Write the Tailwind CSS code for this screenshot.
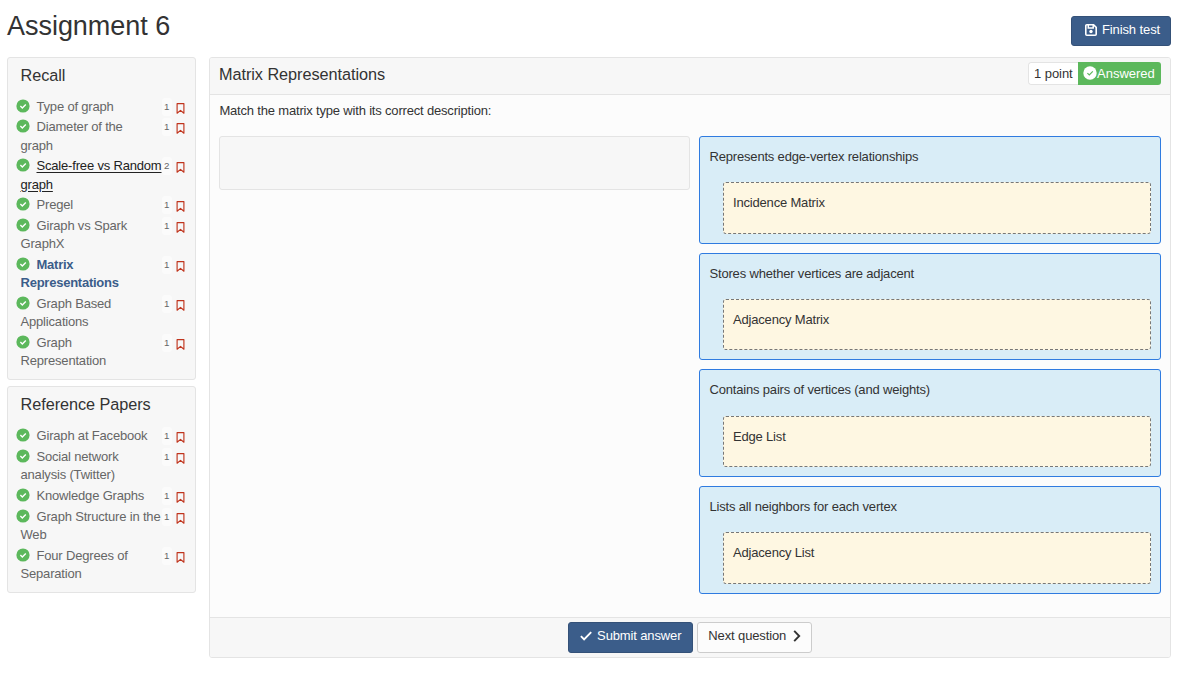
<!DOCTYPE html>
<html lang="en">
<head>
<meta charset="utf-8">
<title>Assignment 6</title>
<script src="https://cdn.jsdelivr.net/npm/@tailwindcss/browser@4"></script>
</head>
<body class="bg-white text-[#333] text-[13px] leading-[18.57px] tracking-[-0.18px] font-['Liberation_Sans',Arial,sans-serif]">
<svg class="hidden">
  <symbol id="ok" viewBox="0 0 14 14"><circle cx="7" cy="7" r="6.6" fill="#5cb85c"/><path d="M4.4 7.1l1.9 1.8 3.5-3.5" fill="none" stroke="#fff" stroke-width="1.4"/></symbol>
  <symbol id="mark" viewBox="0 0 9 11"><path d="M1.1 .6h6.8v9.6L4.5 7.4 1.1 10.2z" fill="none" stroke="#c0341d" stroke-width="1.15" stroke-linejoin="round"/></symbol>
</svg>
<header class="flex justify-between items-start h-[57px] pl-[7px] pr-[9px]">
  <h1 class="text-[27px] leading-[30px] pt-[11px] tracking-[-0.03px]">Assignment 6</h1>
  <button class="mt-4 h-[30px] w-[100px] flex items-center justify-center gap-[5px] rounded-[3px] border border-[#345178] bg-[#3b5d8a] text-white tracking-[-0.1px] pb-[2px] pl-[3px]">
    <svg class="size-3" viewBox="0 0 12 12"><path d="M1.8 .8h6.8l2.6 2.6v6.8a1 1 0 0 1-1 1H1.8a1 1 0 0 1-1-1V1.8a1 1 0 0 1 1-1z" fill="none" stroke="#fff" stroke-width="1.6"/><path d="M3.3 1v3h4.9V1" fill="none" stroke="#fff" stroke-width="1.5"/><circle cx="6" cy="7.5" r="1.7" fill="#fff"/></svg>
    <span>Finish test</span>
  </button>
</header>
<main class="flex items-start gap-[13px] pl-[7px]">
  <aside class="w-[189px] flex flex-col gap-[6px] text-[#666]">
    <section class="h-[323px] rounded-[3px] border border-[#e4e4e4] bg-[#f7f7f7] pt-[7px] pl-[8px]">
      <h2 class="text-[16.25px] leading-5 text-[#333] tracking-[-0.05px] pl-[4.5px] mb-3">Recall</h2>
      <ul>
        <li class="flex items-start h-5"><svg class="size-[14px] mt-[2px] shrink-0"><use href="#ok"/></svg><span class="w-[141px] -ml-[9.5px] indent-4 leading-[19px]">Type of graph</span><span class="w-[10px] h-[18px] mt-px bg-[#fbfbfb] rounded-[3px] text-[9.75px] pl-[2.5px]">1</span><svg class="w-[9px] h-[11px] mt-[6px] ml-[4.5px]"><use href="#mark"/></svg></li>
        <li class="flex items-start h-[39px]"><svg class="size-[14px] mt-[2px] shrink-0"><use href="#ok"/></svg><span class="w-[141px] -ml-[9.5px] indent-4 leading-[19px]">Diameter of the<br>graph</span><span class="w-[10px] h-[18px] mt-px bg-[#fbfbfb] rounded-[3px] text-[9.75px] pl-[2.5px]">1</span><svg class="w-[9px] h-[11px] mt-[6px] ml-[4.5px]"><use href="#mark"/></svg></li>
        <li class="flex items-start h-[39px]"><svg class="size-[14px] mt-[2px] shrink-0"><use href="#ok"/></svg><span class="w-[141px] -ml-[9.5px] indent-4 leading-[19px] whitespace-nowrap text-[#222] underline underline-offset-2">Scale-free vs Random<br>graph</span><span class="w-[10px] h-[18px] mt-px bg-[#fbfbfb] rounded-[3px] text-[9.75px] pl-[2.5px]">2</span><svg class="w-[9px] h-[11px] mt-[6px] ml-[4.5px]"><use href="#mark"/></svg></li>
        <li class="flex items-start h-[21px]"><svg class="size-[14px] mt-[2px] shrink-0"><use href="#ok"/></svg><span class="w-[141px] -ml-[9.5px] indent-4 leading-[19px]">Pregel</span><span class="w-[10px] h-[18px] mt-px bg-[#fbfbfb] rounded-[3px] text-[9.75px] pl-[2.5px]">1</span><svg class="w-[9px] h-[11px] mt-[6px] ml-[4.5px]"><use href="#mark"/></svg></li>
        <li class="flex items-start h-[39px]"><svg class="size-[14px] mt-[2px] shrink-0"><use href="#ok"/></svg><span class="w-[141px] -ml-[9.5px] indent-4 pt-px leading-[18px]">Giraph vs Spark<br>GraphX</span><span class="w-[10px] h-[18px] mt-px bg-[#fbfbfb] rounded-[3px] text-[9.75px] pl-[2.5px]">1</span><svg class="w-[9px] h-[11px] mt-[6px] ml-[4.5px]"><use href="#mark"/></svg></li>
        <li class="flex items-start h-[39px]"><svg class="size-[14px] mt-[2px] shrink-0"><use href="#ok"/></svg><span class="w-[141px] -ml-[9.5px] indent-4 pt-px leading-[18px] font-bold text-[#3b5d8a] tracking-[-0.24px]">Matrix<br>Representations</span><span class="w-[10px] h-[18px] mt-px bg-[#fbfbfb] rounded-[3px] text-[9.75px] pl-[2.5px]">1</span><svg class="w-[9px] h-[11px] mt-[6px] ml-[4.5px]"><use href="#mark"/></svg></li>
        <li class="flex items-start h-[39px]"><svg class="size-[14px] mt-[2px] shrink-0"><use href="#ok"/></svg><span class="w-[141px] -ml-[9.5px] indent-4 pt-px leading-[18px]">Graph Based<br>Applications</span><span class="w-[10px] h-[18px] mt-px bg-[#fbfbfb] rounded-[3px] text-[9.75px] pl-[2.5px]">1</span><svg class="w-[9px] h-[11px] mt-[6px] ml-[4.5px]"><use href="#mark"/></svg></li>
        <li class="flex items-start h-[39px]"><svg class="size-[14px] mt-[2px] shrink-0"><use href="#ok"/></svg><span class="w-[141px] -ml-[9.5px] indent-4 pt-px leading-[18px]">Graph<br>Representation</span><span class="w-[10px] h-[18px] mt-px bg-[#fbfbfb] rounded-[3px] text-[9.75px] pl-[2.5px]">1</span><svg class="w-[9px] h-[11px] mt-[6px] ml-[4.5px]"><use href="#mark"/></svg></li>
      </ul>
    </section>
    <section class="h-[207px] rounded-[3px] border border-[#e4e4e4] bg-[#f7f7f7] pt-[7px] pl-[8px]">
      <h2 class="text-[16.25px] leading-5 text-[#333] tracking-[-0.05px] pl-[4.5px] mb-3">Reference Papers</h2>
      <ul>
        <li class="flex items-start h-[21px]"><svg class="size-[14px] mt-[2px] shrink-0"><use href="#ok"/></svg><span class="w-[141px] -ml-[9.5px] indent-4 leading-[19px]">Giraph at Facebook</span><span class="w-[10px] h-[18px] mt-px bg-[#fbfbfb] rounded-[3px] text-[9.75px] pl-[2.5px]">1</span><svg class="w-[9px] h-[11px] mt-[6px] ml-[4.5px]"><use href="#mark"/></svg></li>
        <li class="flex items-start h-[39px]"><svg class="size-[14px] mt-[2px] shrink-0"><use href="#ok"/></svg><span class="w-[141px] -ml-[9.5px] indent-4 pt-px leading-[18px]">Social network<br>analysis (Twitter)</span><span class="w-[10px] h-[18px] mt-px bg-[#fbfbfb] rounded-[3px] text-[9.75px] pl-[2.5px]">1</span><svg class="w-[9px] h-[11px] mt-[6px] ml-[4.5px]"><use href="#mark"/></svg></li>
        <li class="flex items-start h-[21px]"><svg class="size-[14px] mt-[2px] shrink-0"><use href="#ok"/></svg><span class="w-[141px] -ml-[9.5px] indent-4 leading-[19px]">Knowledge Graphs</span><span class="w-[10px] h-[18px] mt-px bg-[#fbfbfb] rounded-[3px] text-[9.75px] pl-[2.5px]">1</span><svg class="w-[9px] h-[11px] mt-[6px] ml-[4.5px]"><use href="#mark"/></svg></li>
        <li class="flex items-start h-[39px]"><svg class="size-[14px] mt-[2px] shrink-0"><use href="#ok"/></svg><span class="w-[141px] -ml-[9.5px] indent-4 pt-px leading-[18px] whitespace-nowrap">Graph Structure in the<br>Web</span><span class="w-[10px] h-[18px] mt-px bg-[#fbfbfb] rounded-[3px] text-[9.75px] pl-[2.5px]">1</span><svg class="w-[9px] h-[11px] mt-[6px] ml-[4.5px]"><use href="#mark"/></svg></li>
        <li class="flex items-start h-[39px]"><svg class="size-[14px] mt-[2px] shrink-0"><use href="#ok"/></svg><span class="w-[141px] -ml-[9.5px] indent-4 pt-px leading-[18px]">Four Degrees of<br>Separation</span><span class="w-[10px] h-[18px] mt-px bg-[#fbfbfb] rounded-[3px] text-[9.75px] pl-[2.5px]">1</span><svg class="w-[9px] h-[11px] mt-[6px] ml-[4.5px]"><use href="#mark"/></svg></li>
      </ul>
    </section>
  </aside>
  <section class="w-[962px] h-[601px] rounded-[3px] border border-[#e4e4e4] bg-[#fcfcfc] flex flex-col overflow-hidden">
    <div class="h-[37px] shrink-0 bg-[#f7f7f7] border-b border-[#e4e4e4] flex items-start justify-between pl-[9px] pr-[9px]">
      <h2 class="text-[16.25px] leading-5 pt-[6px] tracking-[-0.05px]">Matrix Representations</h2>
      <div class="mt-1 flex h-[23px] rounded-[3px] overflow-hidden leading-[23px] tracking-normal">
        <span class="w-[50px] bg-white border border-r-0 border-[#e4e4e4] rounded-l-[3px] pl-[5px] leading-[21px] tracking-[-0.05px]">1 point</span>
        <span class="w-[83px] bg-[#5cb85c] text-white flex pl-[5px]"><svg class="size-[14px] mt-[4px] shrink-0" viewBox="0 0 14 14"><circle cx="7" cy="7" r="6.7" fill="#fff"/><path d="M4.4 7.1l1.9 1.8 3.5-3.5" fill="none" stroke="#5cb85c" stroke-width="1.2"/></svg>Answered</span>
      </div>
    </div>
    <div class="flex-1 px-[9px] pt-[7px]">
      <p class="pl-[.4px]">Match the matrix type with its correct description:</p>
      <div class="flex gap-[9px] mt-[15.43px]">
        <div class="w-[471px] h-[54px] rounded-[3px] border border-[#e4e4e4] bg-[#f7f7f7]"></div>
        <div class="w-[462px] flex flex-col gap-[9px]">
          <div class="h-[107.7px] rounded-[3px] border border-[#2f7be0] bg-[#d9edf7] pl-[9.5px] pt-[11px]"><p>Represents edge-vertex relationships</p>
            <div class="mt-[15.5px] ml-[13.5px] w-[428px] h-[52px] rounded-[3px] border border-dashed border-[#777] bg-[#fef7e2] pl-[9px] pt-[11px]">Incidence Matrix</div></div>
          <div class="h-[107.7px] rounded-[3px] border border-[#2f7be0] bg-[#d9edf7] pl-[9.5px] pt-[11px]"><p>Stores whether vertices are adjacent</p>
            <div class="mt-[15.5px] ml-[13.5px] w-[428px] h-[51.5px] rounded-[3px] border border-dashed border-[#777] bg-[#fef7e2] pl-[9px] pt-[11px]">Adjacency Matrix</div></div>
          <div class="h-[107.7px] rounded-[3px] border border-[#2f7be0] bg-[#d9edf7] pl-[9.5px] pt-[11px]"><p>Contains pairs of vertices (and weights)</p>
            <div class="mt-[15.7px] ml-[13.5px] w-[428px] h-[51.5px] rounded-[3px] border border-dashed border-[#777] bg-[#fef7e2] pl-[9px] pt-[11px]">Edge List</div></div>
          <div class="h-[107.7px] rounded-[3px] border border-[#2f7be0] bg-[#d9edf7] pl-[9.5px] pt-[11px]"><p>Lists all neighbors for each vertex</p>
            <div class="mt-[15.5px] ml-[13.5px] w-[428px] h-[52px] rounded-[3px] border border-dashed border-[#777] bg-[#fef7e2] pl-[9px] pt-[11px]">Adjacency List</div></div>
        </div>
      </div>
    </div>
    <div class="h-[40px] shrink-0 bg-[#f7f7f7] border-t border-[#e4e4e4] flex justify-center gap-1 pt-1 tracking-[-0.13px]">
      <button class="w-[125px] h-[31px] rounded-[3px] border border-[#345178] bg-[#3b5d8a] text-white flex items-center justify-center gap-[5.5px] pb-[3px]"><svg class="w-3 h-[10px]" viewBox="0 0 12 10"><path d="M.9 5.2l3.2 3.2L11.2 1.2" fill="none" stroke="#fff" stroke-width="1.9"/></svg>Submit answer</button>
      <button class="w-[115px] h-[31px] rounded-[3px] border border-[#ccc] bg-[#fcfcfc] flex items-center justify-center gap-[7px] pb-[3px] pl-[.5px]">Next question<svg class="w-2 h-3" viewBox="0 0 8 12"><path d="M1.2 .8l5 5.2-5 5.2" fill="none" stroke="#333" stroke-width="1.9"/></svg></button>
    </div>
  </section>
</main>
</body>
</html>
